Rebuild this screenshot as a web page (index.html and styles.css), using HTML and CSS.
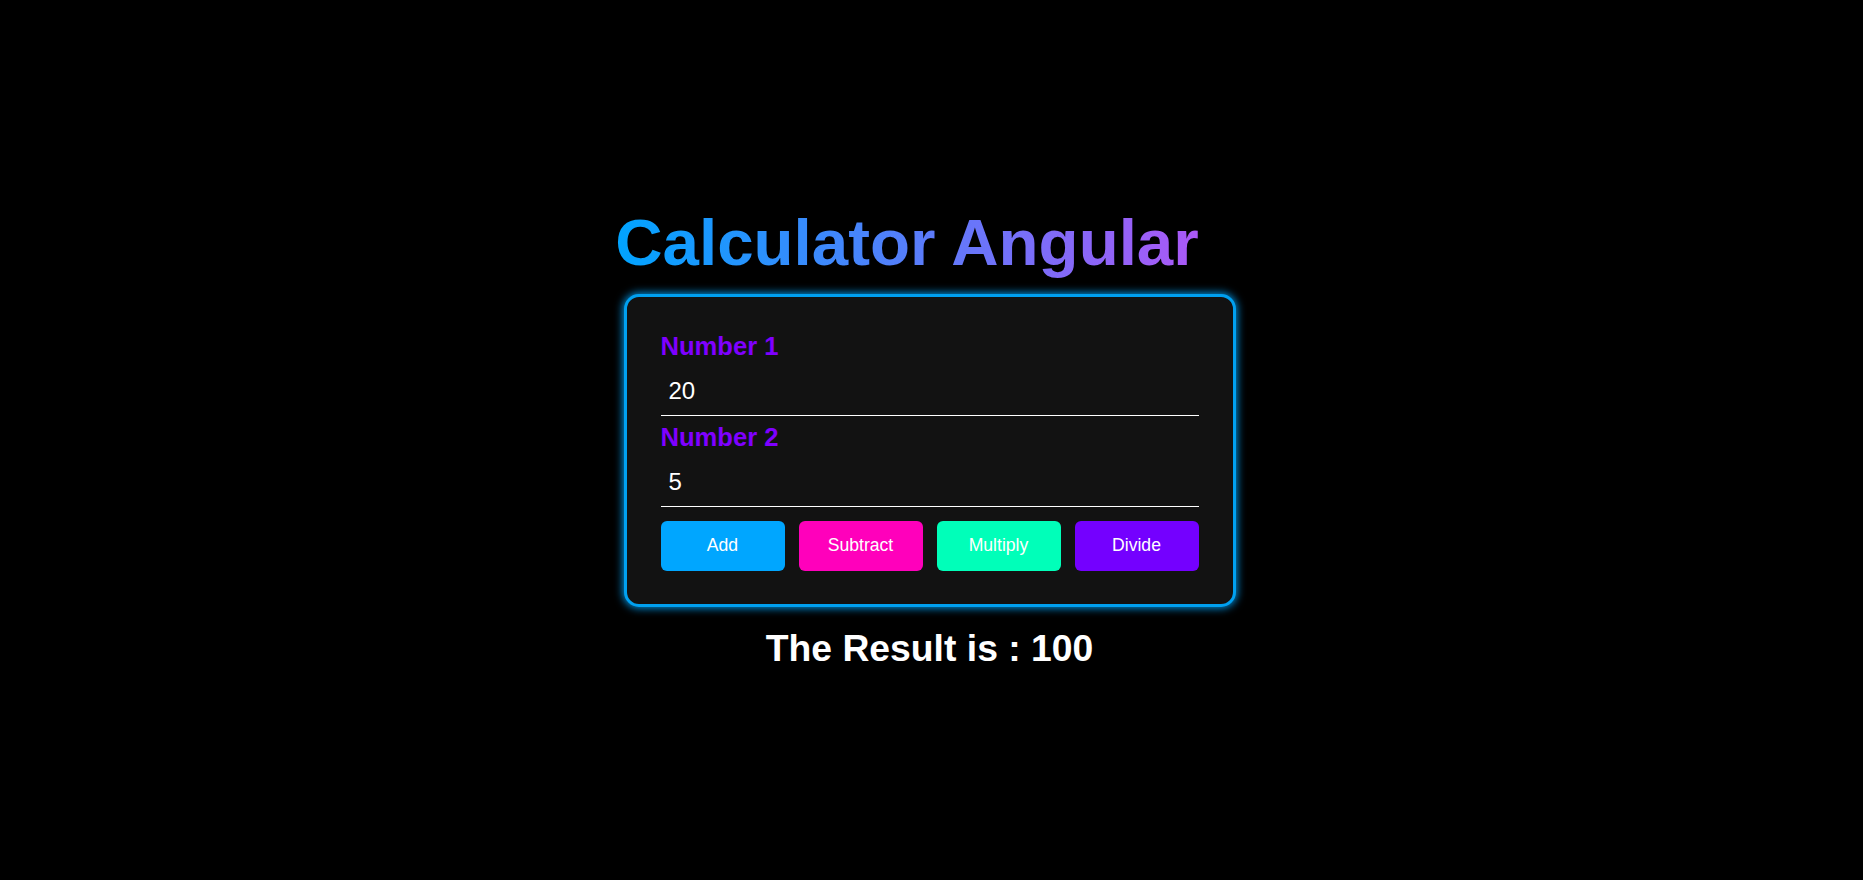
FILE: index.html
```html
<!DOCTYPE html>
<html lang="en">
<head>
<meta charset="utf-8">
<title>Calculator Angular</title>
<link rel="stylesheet" href="styles.css">
</head>
<body>
<main class="app">
  <h1 class="title">Calculator Angular</h1>
  <div class="card">
    <label class="field-label" for="n1">Number 1</label>
    <input class="field-input" id="n1" type="text" value="20">
    <label class="field-label second" for="n2">Number 2</label>
    <input class="field-input" id="n2" type="text" value="5">
    <div class="actions">
      <button class="btn btn-add">Add</button>
      <button class="btn btn-sub">Subtract</button>
      <button class="btn btn-mul">Multiply</button>
      <button class="btn btn-div">Divide</button>
    </div>
  </div>
  <h2 class="result">The Result is : 100</h2>
</main>
</body>
</html>
```
FILE: styles.css
```css
html, body {
  margin: 0;
  padding: 0;
  background: #000;
}

body {
  font-family: "Liberation Sans", Arial, sans-serif;
  color: #fff;
}

.app {
  box-sizing: border-box;
  height: 100vh;
  padding: 0 4px 6px 0;
  display: flex;
  flex-direction: column;
  align-items: center;
  justify-content: center;
}

.title {
  margin: 0 45px 14px 0;
  font-size: 65.5px;
  font-weight: bold;
  line-height: normal;
  background: linear-gradient(to right, #00a4ff, #ab58f6);
  -webkit-background-clip: text;
  background-clip: text;
  color: transparent;
}

.card {
  box-sizing: border-box;
  width: 612px;
  padding: 34px 34px 33px 34px;
  background: #121212;
  border: 3px solid #00a0f0;
  border-radius: 15px;
  box-shadow: 0 0 8px 1px #0098ea;
  display: flex;
  flex-direction: column;
}

.field-label {
  display: block;
  font-size: 25.6px;
  font-weight: bold;
  line-height: 30px;
  color: #7f00ff;
}

.field-label.second {
  margin-top: 6px;
}

.field-input {
  box-sizing: content-box;
  display: block;
  width: auto;
  margin: 0;
  padding: 16px 8px 10px 8px;
  height: 28px;
  line-height: 28px;
  font-family: "Liberation Sans", Arial, sans-serif;
  font-size: 24px;
  color: #fff;
  background: transparent;
  border: none;
  border-bottom: 1px solid #fff;
  outline: none;
}

.actions {
  display: flex;
  gap: 14px;
  margin-top: 14px;
}

.btn {
  flex: 1;
  height: 50px;
  border: none;
  border-radius: 6px;
  font-family: "Liberation Sans", Arial, sans-serif;
  font-size: 17.6px;
  color: #fff;
  cursor: pointer;
}

.btn-add { background: #00a6ff; }
.btn-sub { background: #ff00bb; }
.btn-mul { background: #00ffb9; }
.btn-div { background: #7400ff; }

.result {
  margin: 20px 0 0 0;
  font-size: 37.3px;
  font-weight: bold;
  line-height: normal;
  color: #fff;
}
```
